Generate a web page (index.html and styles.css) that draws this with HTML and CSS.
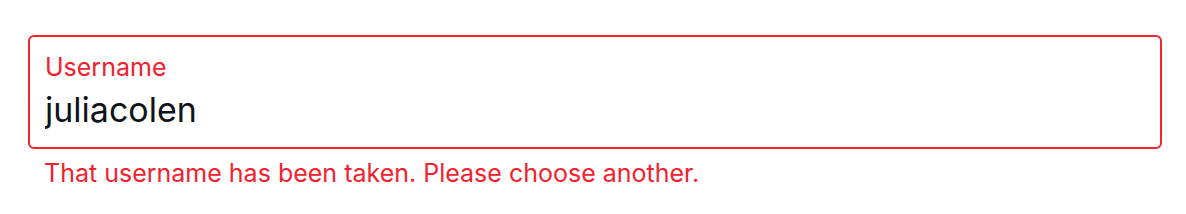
FILE: index.html
```html
<!DOCTYPE html>
<html lang="en">
  <head>
    <meta charset="UTF-8" />
    <meta name="viewport" content="width=device-width, initial-scale=1.0" />
    <title>Username</title>
    <link rel="stylesheet" href="styles.css">
  </head>
  <body>
    <div class="field">
      <label class="field-box" for="username">
        <span class="field-label">Username</span>
        <input id="username" name="username" type="text" value="juliacolen" />
      </label>
      <p class="field-error">That username has been taken. Please choose another.</p>
    </div>
  </body>
</html>
```

FILE: styles.css
```css
* {
  margin: 0;
  padding: 0;
  box-sizing: border-box;
  font-family: Inter, Roboto, "Liberation Sans", sans-serif;
}

body {
  background-color: #fff;
  padding: 35px 24px 0 28px;
}

.field-box {
  display: flex;
  flex-direction: column;
  height: 114px;
  padding: 15px 16px 0 15px;
  border: 2px solid #f4212e;
  border-radius: 6px;
}

.field-label {
  color: #f4212e;
  font-size: 25px;
  line-height: 30px;
}

input {
  height: 40px;
  margin-top: 8px;
  border: none;
  outline: none;
  font-size: 34px;
  line-height: 40px;
  color: #0f1419;
  background: transparent;
}

.field-error {
  color: #f4212e;
  font-size: 25px;
  line-height: 30px;
  padding: 9px 0 0 16px;
}
```
